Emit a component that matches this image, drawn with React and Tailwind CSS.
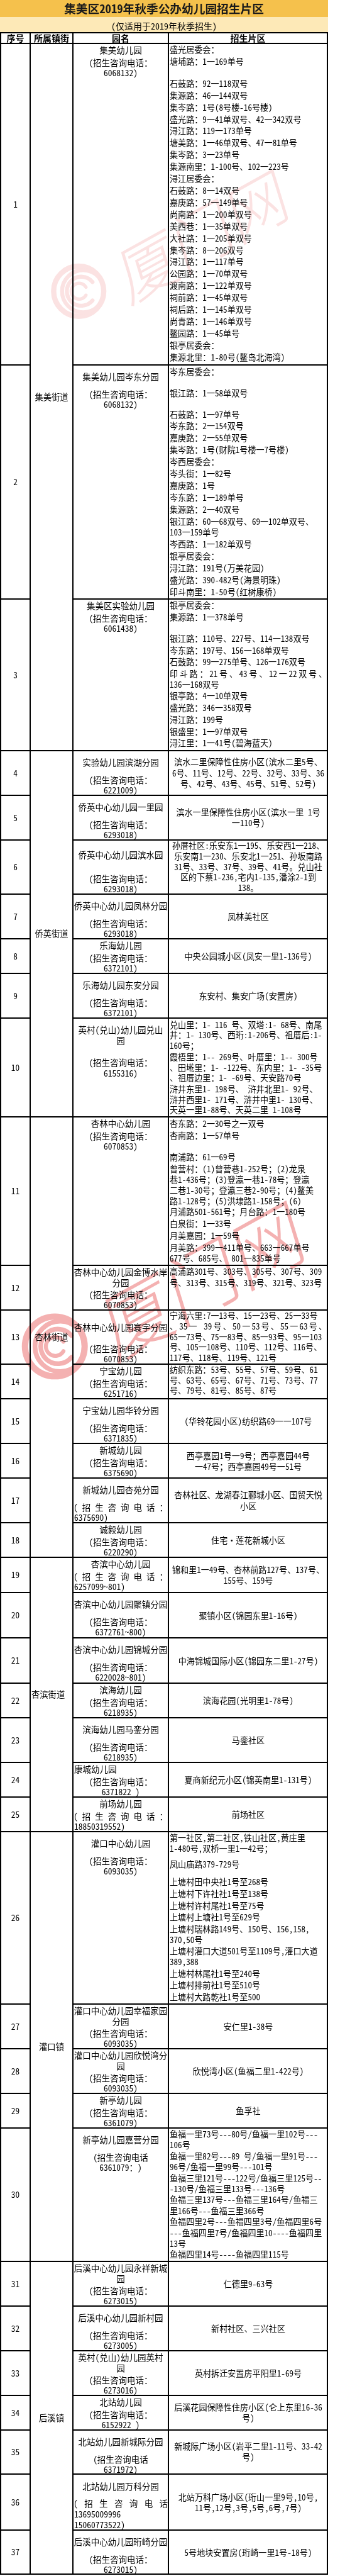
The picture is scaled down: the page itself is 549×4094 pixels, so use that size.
import clsx from "clsx";

// 园名列里各行的上边距（按参考图量出来的）
const GAPS = {
  a: ["mt-px", "mt-[3.5px]", "mt-[0.5px]"],
  a4: ["mt-px", "mt-px", "mt-[3px]", "mt-0"],
  b: ["mt-[9px]", "mt-[12px]", "mt-0"],
  c6: ["mt-[14px]", "mt-[22px]", "mt-0"],
  c13: ["mt-[18px]", "mt-[18px]", "mt-0"],
  r10: ["mt-[9px]", "mt-px", "mt-[19px]", "mt-px"],
  r36: ["mt-[10px]", "mt-[11px]", "mt-px", "mt-px"],
};

const LABEL = "（招生咨询电话：";

const districts = {
  1: { name: "集美街道", span: "row-span-3" },
  4: { name: "侨英街道", span: "row-span-7" },
  11: { name: "杏林街道", span: "row-span-8" },
  19: { name: "杏滨街道", span: "row-span-7", left: true },
  26: { name: "灌口镇", span: "row-span-5" },
  31: { name: "后溪镇", span: "row-span-7" },
};

const rows = [
  {
    s: { n: ["集美幼儿园"], num: ["6068132）"], g: "a" },
    a: {
      cls: "leading-[18.9px]",
      blank: "h-[16px]",
      p: [
        "盛光居委会：",
        "塘埔路：1一169单号",
        null,
        "石鼓路：92一118双号",
        "集源路：46一144双号",
        "集岑路：1号（8号楼-16号楼）",
        "盛光路：9一41单双号、42一342双号",
        "浔江路：119一173单号",
        "塘美路：1一46单双号、47一81单号",
        "集岑路：3一23单号",
        "集源南里：1-100号、102一223号",
        "浔江居委会：",
        "石鼓路：8一14双号",
        "嘉庚路：57一149单号",
        "尚南路：1一200单双号",
        "美西巷：1一35单双号",
        "大社路：1一205单双号",
        "集岑路：8一206双号",
        "浔江路：1一117单号",
        "公园路：1一70单双号",
        "渡南路：1一122单双号",
        "祠前路：1一45单双号",
        "祠后路：1一145单双号",
        "尚青路：1一146单双号",
        "鳌园路：1一45单号",
        "银亭居委会：",
        "集源北里：1-80号（鳌岛北海湾）",
      ],
    },
  },
  {
    s: { n: ["集美幼儿园岑东分园"], num: ["6068132）"], g: "b" },
    a: {
      cls: "leading-[17.4px]",
      pcls: "py-[0.75px]",
      blank: "h-[15px]",
      p: [
        "岑东居委会：",
        null,
        "银江路：1一58单双号",
        null,
        "石鼓路：1一97单号",
        "岑东路：2一154双号",
        "嘉庚路：2一55单双号",
        "集岑路：1号（财院1号楼一7号楼）",
        "岑西居委会：",
        "岑头街：1一82号",
        "嘉庚路：1号",
        "岑东路：1一189单号",
        "集源路：2一40双号",
        ["银江路：60一68双号、69一102单双号、", "103一159单号"],
        "岑西路：1一182单双号",
        "银亭居委会：",
        "浔江路：191号（万美花园）",
        "盛光路：390-482号（海景明珠）",
        "印斗南里：1-50号（红树康桥）",
      ],
    },
  },
  {
    s: { n: ["集美区实验幼儿园"], num: ["6061438）"], g: "a" },
    a: {
      cls: "leading-[16.7px]",
      pcls: "py-px",
      blank: "h-[15.5px]",
      p: [
        "银亭居委会：",
        "集源路：1一378单号",
        null,
        "银江路：110号、227号、114一138双号",
        "岑东路：197号、156一168单双号",
        "石鼓路：99一275单号、126一176双号",
        [{ j: "印斗路：21号、43号、12一22双号、" }, "136一168双号"],
        "银亭路：4一10单双号",
        "盛光路：346一358双号",
        "浔江路：199号",
        "银盛里：1一97单双号",
        "浔江里：1一41号（碧海蓝天）",
      ],
    },
  },
  {
    s: { n: ["实验幼儿园滨湖分园"], num: ["6221009）"], g: "b" },
    a: {
      mid: true,
      cls: "leading-[17.5px]",
      p: [["滨水二里保障性住房小区（滨水二里5号、", "6号、11号、12号、22号、32号、33号、36", "号、42号、43号、45号、51号、52号）"]],
    },
  },
  {
    s: { n: ["侨英中心幼儿园一里园"], num: ["6293018）"], g: "b" },
    a: { mid: true, cls: "leading-[16.7px]", p: [["滨水一里保障性住房小区（滨水一里 1号", "一110号）"]] },
  },
  {
    s: { n: ["侨英中心幼儿园滨水园"], num: ["6293018）"], g: "c6" },
    a: {
      mid: true,
      cls: "leading-[16.8px]",
      p: [
        [
          "孙厝社区:乐安东1一195、乐安西1一218、",
          "乐安南1一230、乐安北1一251、孙坂南路",
          "31号、33号、37号、39号、41号。兑山社",
          "区的下蔡1-236，宅内1-135，潘涂2-1到",
          "138。",
        ],
      ],
    },
  },
  { s: { n: ["侨英中心幼儿园凤林分园"], num: ["6293018）"], g: "b" }, a: { mid: true, p: ["凤林美社区"] } },
  { s: { n: ["乐海幼儿园"], num: ["6372101）"], g: "a" }, a: { mid: true, p: ["中央公园城小区（凤安一里1-136号）"] } },
  { s: { n: ["乐海幼儿园东安分园"], num: ["6372101）"], g: "b" }, a: { mid: true, p: ["东安村、集安广场（安置房）"] } },
  {
    s: { n: ["英村（兑山）幼儿园兑山", "园"], num: ["6155316）"], g: "r10" },
    a: {
      cls: "leading-[16.4px] pt-px",
      pcls: "py-px",
      p: [
        ["兑山里：1- 116 号、双塔:1- 68号、南尾", "井：1- 130号、西珩:1-206号、祖厝后:1-", "160号；"],
        ["霞梧里：1-- 269号、叶厝里：1-- 300号", "、田墘里：1- -122号、东内里：1- -35号", "、祖厝边里：1- -69号、天安路70号"],
        ["浒井东里1- 198号、 浒井北里1- 92号、", "浒井西里1- 171号、浒井中里1- 130号、", "天英一里1-88号、天英二里 1-108号"],
      ],
    },
  },
  {
    s: { n: ["杏林中心幼儿园"], num: ["6070853）"], g: "a" },
    a: {
      cls: "leading-[17px]",
      pcls: "py-px",
      blank: "h-[15px]",
      p: [
        "杏东路：2一30号之一双号",
        "杏南路：1一57单号",
        null,
        "南浦路：61一69号",
        [
          "曾营村：（1）曾营巷1-252号；（2）龙泉",
          "巷1-436号；（3）登瀛一巷1-78号；登瀛",
          "二巷1-30号；登瀛三巷2-90号；（4）鳌美",
          "路1-128号；（5）洪埭路1-158号；（6）",
          "月浦路501-561号；月台路：1一180号",
        ],
        "白泉街：1一33号",
        "月美嘉园：1一59号",
        ["月美路：399一411单号、663一667单号", "677号、685号、 801一835单号"],
      ],
    },
  },
  {
    s: { n: ["杏林中心幼儿园金博水岸", "分园"], num: ["6070853）"], g: "a4" },
    a: { cls: "leading-[18px]", p: [["高浦路301号、303号、305号、307号、309", "号、313号、315号、319号、321号、323号"]] },
  },
  {
    s: { n: ["杏林中心幼儿园寰宇分园"], num: ["6070853）"], g: "c13" },
    a: {
      cls: "leading-[16.8px]",
      p: [
        [
          "宁海六里:7一13号、15一23号、25一33号",
          { j: "、35一 39号、50一53号、55一63号、" },
          "65一73号、75一83号、85一93号、95一103",
          "号、105一108号、110号、112号、116号、",
          "117号、118号、119号、121号",
        ],
      ],
    },
  },
  {
    s: { n: ["宁宝幼儿园"], num: ["6251716）"], g: "a" },
    a: { cls: "leading-[16.7px]", p: [["纺织东路：53号、55号、57号、59号、61", "号、63号、65号、67号、71号、73号、77", "号、79号、81号、85号、87号"]] },
  },
  { s: { n: ["宁宝幼儿园华铃分园"], num: ["6371835）"], g: "b" }, a: { mid: true, p: ["（华铃花园小区）纺织路69一一107号"] } },
  {
    s: { n: ["新城幼儿园"], num: ["6375690）"], g: "a" },
    a: { mid: true, cls: "leading-[17px]", p: [["西亭嘉园1号一9号；西亭嘉园44号", "一47号；西亭嘉园49号一51号"]] },
  },
  {
    s: { n: ["新城幼儿园杏苑分园"], ls: true, num: ["6375690）"], numl: true, g: "b" },
    a: { mid: true, cls: "leading-[18px]", p: [["杏林社区、龙湖春江郦城小区、国贸天悦", "小区"]] },
  },
  { s: { n: ["诚毅幼儿园"], num: ["6220290）"], g: "a" }, a: { mid: true, p: ["住宅·莲花新城小区"] } },
  {
    s: { n: ["杏滨中心幼儿园"], ls: true, num: ["6257099～801）"], numl: true, g: "a" },
    a: { mid: true, cls: "leading-[17px]", p: [["锦和里1一49号、杏林前路127号、137号、", "155号、159号"]] },
  },
  { s: { n: ["杏滨中心幼儿园聚镇分园"], num: ["6372761～800）"], g: "b" }, a: { mid: true, p: ["聚镇小区(锦园东里1-16号)"] } },
  { s: { n: ["杏滨中心幼儿园锦城分园"], num: ["6220028～801）"], g: "b" }, a: { mid: true, p: ["中海锦城国际小区(锦园东二里1-27号)"] } },
  { s: { n: ["滨海幼儿园"], num: ["6218935）"], g: "a" }, a: { mid: true, p: ["滨海花园(光明里1-78号)"] } },
  { s: { n: ["滨海幼儿园马銮分园"], num: ["6218935）"], g: "b" }, a: { mid: true, p: ["马銮社区"] } },
  { s: { n: ["康城幼儿园"], nl: true, num: ["6371822 ）"], g: "a" }, a: { mid: true, p: ["夏商新纪元小区（锦英南里1-131号）"] } },
  { s: { n: ["前场幼儿园"], ls: true, num: ["18850319552）"], numl: true, g: "a" }, a: { mid: true, p: ["前场社区"] } },
  {
    s: { n: ["灌口中心幼儿园"], num: ["6093035）"], g: "b" },
    a: {
      cls: "leading-[16.7px]",
      pcls: "py-px",
      p: [
        ["第一社区，第二社区，铁山社区，黄庄里", "1-480号，双桥一里1一42号；"],
        { c: "mt-[7px]", t: "凤山庙路379-729号" },
        { c: "mt-[9px]", t: "上塘村田中央社1号至268号" },
        "上塘村下许社社1号至138号",
        "上塘村许村尾社1号至75号",
        "上塘村上塘社1号至629号",
        ["上塘村瑞林路149号、150号、156，158，", "370，50号"],
        ["上塘村灌口大道501号至1109号，灌口大道", "389，388"],
        "上塘村林尾社1号至240号",
        "上塘村排前社1号至510号",
        "上塘村大路乾社1号至500",
      ],
    },
  },
  { s: { n: ["灌口中心幼儿园幸福家园", "分园"], num: ["6093035）"], g: "a4" }, a: { mid: true, p: ["安仁里1-38号"] } },
  { s: { n: ["灌口中心幼儿园欣悦湾分", "园"], num: ["6093035）"], g: "a4" }, a: { mid: true, p: ["欣悦湾小区（鱼福二里1-422号）"] } },
  { s: { n: ["新亭幼儿园"], num: ["6361079）"], g: "a" }, a: { mid: true, p: ["鱼孚社"] } },
  {
    s: { n: ["新亭幼儿园嘉营分园"], l: "（招生咨询电话", num: ["6361079：）"], g: "b" },
    a: {
      cls: "leading-[17.4px]",
      p: [
        [
          "鱼福一里73号---80号/鱼福一里102号---",
          "106号",
          "鱼福一里82号---89 号/鱼福一里91号---",
          "96号/鱼福一里99号---101号",
          "鱼福三里121号---122号/鱼福三里125号--",
          "-130号/鱼福三里133号---136号",
          "鱼福三里137号---鱼福三里164号/鱼福三",
          "里166号---鱼福三里366号",
          "鱼福四里2号---鱼福四里3号/鱼福四里6号",
          "---鱼福四里7号/鱼福四里10----鱼福四里",
          "13号",
          "鱼福四里14号----鱼福四里115号",
        ],
      ],
    },
  },
  { s: { n: ["后溪中心幼儿园永祥新城", "园"], num: ["6273015）"], g: "a4" }, a: { mid: true, p: ["仁德里9-63号"] } },
  { s: { n: ["后溪中心幼儿园新村园"], num: ["6273005）"], g: "b" }, a: { mid: true, p: ["新村社区、三兴社区"] } },
  { s: { n: ["英村（兑山）幼儿园英村", "园"], num: ["6273016）"], g: "a4" }, a: { mid: true, p: ["英村拆迁安置房平阳里1-69号"] } },
  {
    s: { n: ["北站幼儿园"], num: ["6152922 ）"], g: "a" },
    a: { mid: true, cls: "leading-[16.7px]", p: [["后溪花园保障性住房小区（仑上东里16-36", "号）"]] },
  },
  {
    s: { n: ["北站幼儿园新城际分园"], l: "（招生咨询电话", num: ["6371972）"], g: "b" },
    a: { mid: true, cls: "leading-[16.7px]", p: [["新城际广场小区（岩平二里1-11号、33-42", "号）"]] },
  },
  {
    s: { n: ["北站幼儿园万科分园"], l: "（招生咨询电话", ls: true, num: ["13695009996", "15060773522）"], numl: true, g: "r36" },
    a: { mid: true, cls: "leading-[16.7px] pt-[3px]", p: [["北站万科广场小区（珩山一里9号，10号，", "11号，12号，3号，5号，6号，7号）"]] },
  },
  { s: { n: ["后溪中心幼儿园珩崎分园"], num: ["6273015）"], g: "b" }, a: { mid: true, p: ["5号地块安置房（珩崎一里1号-18号）"] } },
];

function Spread({ text }) {
  return (
    <div className="flex justify-between">
      {[...text].map((ch, i) => (
        <span key={i}>{ch}</span>
      ))}
    </div>
  );
}

function School({ s }) {
  const gaps = GAPS[s.g];
  const lines = [
    ...s.n.map((t) => ({ t, left: s.nl })),
    { t: s.l || LABEL, spread: s.ls },
    ...s.num.map((t) => ({ t, left: s.numl })),
  ];
  return (
    <div className="bg-white text-center text-[13.5px]">
      {lines.map((ln, i) => (
        <div key={i} className={clsx("h-4 whitespace-nowrap leading-4", gaps[i], ln.left && "pl-px text-left")}>
          {ln.spread ? <Spread text={ln.t} /> : ln.t}
        </div>
      ))}
    </div>
  );
}

function Line({ l }) {
  if (typeof l === "object") return <div className="text-justify [text-align-last:justify]">{l.j}</div>;
  return <div>{l}</div>;
}

function Para({ p, pcls, blank }) {
  if (p === null) return <div className={blank} />;
  if (typeof p === "string") return <div className={pcls}>{p}</div>;
  if (Array.isArray(p))
    return (
      <div className={pcls}>
        {p.map((l, i) => (
          <Line key={i} l={l} />
        ))}
      </div>
    );
  return (
    <div className={clsx(pcls, p.c)}>
      {[].concat(p.t).map((l, i) => (
        <Line key={i} l={l} />
      ))}
    </div>
  );
}

function Area({ a }) {
  return (
    <div
      className={clsx(
        "whitespace-nowrap bg-white pl-px text-[13.1px]",
        a.mid && "flex flex-col justify-center text-center",
        a.cls || "leading-[19px]"
      )}
    >
      {a.p.map((p, i) => (
        <Para key={i} p={p} pcls={a.pcls} blank={a.blank} />
      ))}
    </div>
  );
}

// 水印：圆形台标 + 斜排的“厦门网”
function Mark({ className, color }) {
  return (
    <svg viewBox="0 -40 405 300" className={clsx("pointer-events-none absolute mix-blend-multiply", className)}>
      <g fill="none" stroke={color} strokeLinecap="round">
        <circle cx="45" cy="200" r="38" strokeWidth="8" />
        <path d="M75 178 A32 32 0 1 0 75 222" strokeWidth="6" />
        <path d="M66 186 A22 22 0 1 0 66 214" strokeWidth="6" />
        <path d="M56 194 A12 12 0 1 0 56 206" strokeWidth="5" />
      </g>
      <text
        x="0"
        y="0"
        fontSize="95"
        fontWeight="300"
        fill={color}
        fontFamily="Noto Sans CJK SC, sans-serif"
        transform="translate(120 220) rotate(-29) skewX(-12)"
      >
        厦门网
      </text>
    </svg>
  );
}

export default function App() {
  const cells = [];
  rows.forEach((r, i) => {
    const no = i + 1;
    cells.push(
      <div key={`n${no}`} className="flex items-center justify-center bg-white">
        {no}
      </div>
    );
    const d = districts[no];
    if (d) {
      cells.push(
        <div
          key={`d${no}`}
          className={clsx("flex items-center bg-white", d.span, d.left ? "justify-start pl-px" : "justify-center")}
        >
          {d.name}
        </div>
      );
    }
    cells.push(<School key={`s${no}`} s={r.s} />);
    cells.push(<Area key={`a${no}`} a={r.a} />);
  });

  return (
    <div className="relative w-[549px] overflow-hidden bg-white font-['Noto_Sans_CJK_SC',sans-serif] text-[13.3px] text-black [font-feature-settings:'hwid']">
      <div className="flex h-[27px] w-[522px] items-center justify-center bg-[#f5c14c] text-[18.7px] font-bold leading-none text-[#1a1a1a]">
        集美区2019年秋季公办幼儿园招生片区
      </div>
      <div className="flex h-[24px] w-[522px] items-center justify-center bg-[#fde9b7] pt-[3px] text-[14px] leading-none">
        （仅适用于2019年秋季招生）
      </div>
      <div className="grid w-[522px] grid-cols-[45px_66px_150px_251px] grid-rows-[15px_509px_370px_239px_69px_69px_84px_69px_53px_69px_155px_234px_69px_84px_53px_69px_53px_69px_53px_54px_70px_70px_53px_69px_53px_53px_272px_69px_69px_53px_210px_69px_69px_69px_53px_68px_87px_68px] gap-[2px] bg-black p-[2px]">
        {["序号", "所属镇街", "园名", "招生片区"].map((h) => (
          <div key={h} className="flex items-end justify-center bg-white text-[14px] font-bold leading-[15px]">
            {h}
          </div>
        ))}
        {cells}
      </div>
      <Mark className="left-[78px] top-[211px] w-[425px] opacity-20" color="#e86a6a" />
      <Mark className="left-[31px] top-[1840px] w-[506px] opacity-40" color="#e23a3a" />
    </div>
  );
}
